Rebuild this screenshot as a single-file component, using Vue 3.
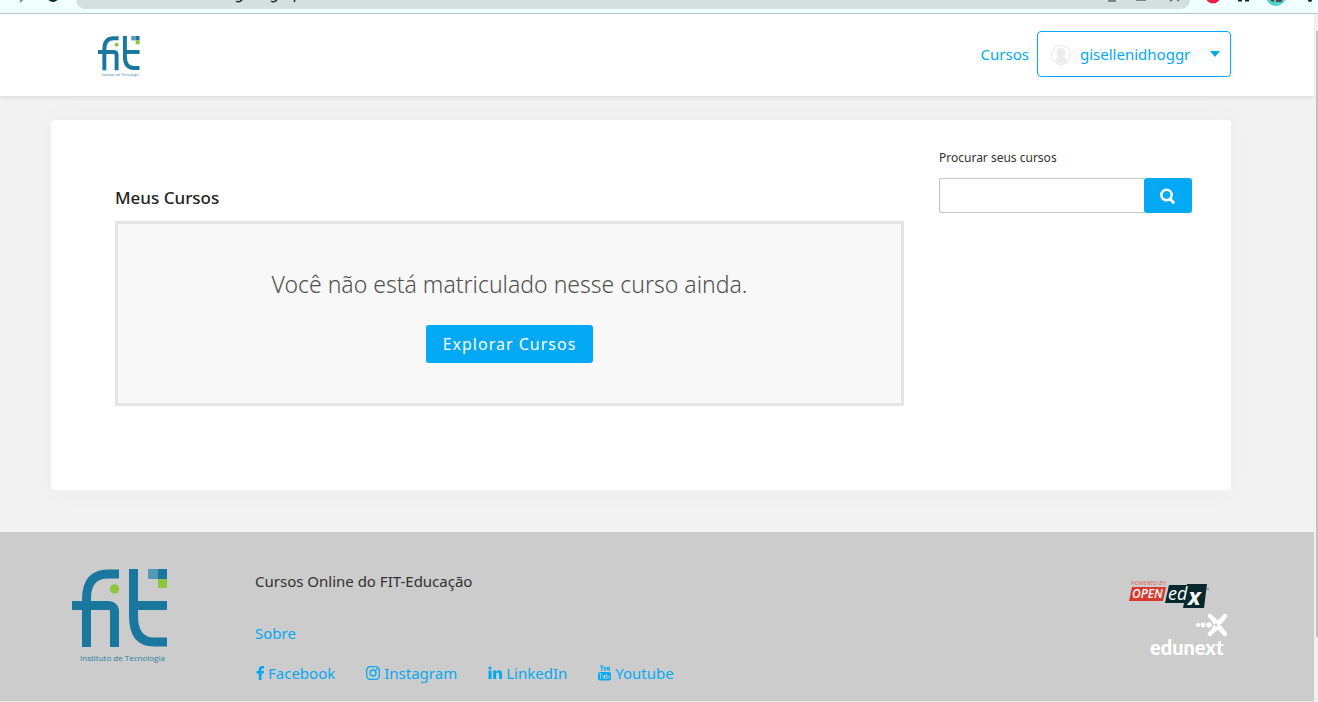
<script setup>
const socials = [
  { id: 'facebook', label: 'Facebook', w: 9 },
  { id: 'instagram', label: 'Instagram', w: 14 },
  { id: 'linkedin', label: 'LinkedIn', w: 14 },
  { id: 'youtube', label: 'Youtube', w: 13 },
]
</script>

<template>
  <div class="window">
    <svg width="0" height="0" class="defs" aria-hidden="true">
      <symbol id="fit-logo" viewBox="0 0 96 96" overflow="visible">
        <g fill="none" stroke="#1a779e" stroke-width="9">
          <path d="M47 5H36Q14.500 5 14.500 30V78" />
          <path d="M0 36.500H36Q42.500 36.500 42.500 43V78" />
          <path d="M61.500 0V47Q61.500 73 82 73H95" />
          <path d="M61.500 36.500H95" />
        </g>
        <circle cx="42.500" cy="20" r="4.700" fill="#8cc63e" />
        <rect x="76" y="0" width="10" height="10" fill="#5598bb" />
        <rect x="86" y="0" width="9" height="10" fill="#1a779e" />
        <rect x="86" y="10" width="9" height="9" fill="#8cc63e" />
        <text x="8" y="92" font-family="Open Sans, sans-serif" font-size="8" font-weight="400" fill="#2c7fa3">Instituto de Tecnologia</text>
      </symbol>
    </svg>

    <div class="browser">
      <svg class="nav-icons" width="76" height="13" aria-hidden="true">
        <path d="M20 2l3-3" stroke="#7d9696" stroke-width="2" />
        <circle cx="53" cy="-4" r="5" fill="none" stroke="#0b2b2b" stroke-width="2" />
      </svg>
      <div class="address">
        <svg class="url" width="80" height="9" fill="none" stroke="#20292c" stroke-width="1.500" aria-hidden="true">
          <path d="M10 1q3 2 6-1M45 1q3 2 6-1M68 2l1-2" />
        </svg>
        <svg width="90" height="9" fill="none" stroke="#5c6668" stroke-width="1.500" aria-hidden="true">
          <path d="M9 0v1h6V0M36 0h10M70 1l5-3 4 3" />
        </svg>
      </div>
      <svg width="128" height="13" aria-hidden="true">
        <circle cx="23" cy="-4" r="7.500" fill="#f01c42" />
        <path d="M48 0h4M55 0h4" stroke="#082c2c" stroke-width="3" />
        <circle cx="86" cy="-4" r="10" fill="#50d5ca" />
        <path d="M81 0l3 1M86 1h6" fill="none" stroke="#514a52" stroke-width="2" />
        <circle cx="120" cy="0" r="2" fill="#072626" />
      </svg>
    </div>

    <div class="viewport">
      <div class="page">
        <header>
          <a href="#" class="brand" aria-label="FIT Instituto de Tecnologia"><svg width="42" height="42"><use href="#fit-logo" /></svg></a>
          <nav>
            <a href="#" class="courses-link">Cursos</a>
            <button type="button" class="user">
              <svg width="22" height="22" viewBox="0 0 22 22" aria-hidden="true">
                <circle cx="11" cy="12" r="9.500" fill="#fff" stroke="#e5e5e5" />
                <circle cx="11" cy="9.500" r="4.500" fill="#ececec" />
                <path d="M5 18q1-5 6-5t6 5q-6 5-12 0z" fill="#ececec" />
              </svg>
              <span>gisellenidhoggr</span>
              <svg width="10" height="6" aria-hidden="true"><path d="M0 0h10L5 6z" fill="#03a9f4" /></svg>
            </button>
          </nav>
        </header>

        <main>
          <section class="courses">
            <h2>Meus Cursos</h2>
            <div class="empty">
              <p>Você não está matriculado nesse curso ainda.</p>
              <a href="#" class="explore">Explorar Cursos</a>
            </div>
          </section>
          <form class="search" @submit.prevent>
            <label for="course-search">Procurar seus cursos</label>
            <div class="field">
              <input id="course-search" type="text">
              <button type="submit" aria-label="Procurar">
                <svg width="16" height="16" fill="none" stroke="#fff" aria-hidden="true">
                  <circle cx="6.500" cy="7" r="5.200" stroke-width="2.600" />
                  <path d="M10 11l3.500 3.500" stroke-width="3" stroke-linecap="round" />
                </svg>
              </button>
            </div>
          </form>
        </main>

        <footer>
          <svg class="footer-logo" width="96" height="96" role="img" aria-label="FIT"><use href="#fit-logo" /></svg>
          <div class="info">
            <p>Cursos Online do FIT-Educação</p>
            <a href="#" class="about">Sobre</a>
            <div class="socials">
              <a v-for="s in socials" :key="s.id" href="#">
                <svg :width="s.w" height="16" :viewBox="`0 0 ${s.w} 16`" fill="#03a9f4" aria-hidden="true">
                  <path v-if="s.id === 'facebook'" d="M9 1v2.400H7.600Q6.500 3.400 6.500 4.600V6H9l-.4 2.600H6.500V15H3.800V8.600H1.500V6h2.300V4.200Q3.800 1 7 .9z" />
                  <g v-else-if="s.id === 'instagram'" fill="none" stroke="#03a9f4" stroke-width="1.300">
                    <rect x=".7" y="1.700" width="12.600" height="12.600" rx="3.500" />
                    <circle cx="7" cy="8" r="3" />
                    <circle cx="10.700" cy="4.300" r=".4" />
                  </g>
                  <g v-else-if="s.id === 'linkedin'">
                    <circle cx="2" cy="3" r="1.600" />
                    <path d="M.5 5.500h3V14h-3zM5.200 5.500H8v1.200q1-1.500 3-1.500 3 0 3 4V14h-2.900V9.500Q11.100 7.500 9.700 7.500 8.100 7.500 8.100 9.500V14H5.200z" />
                  </g>
                  <g v-else>
                    <path d="M2.500 0l1.300 3.500V6M5 0L3.800 3.500M9.500 1.800v3q0 .8 1.700 0V1.800v4" fill="none" stroke="#03a9f4" />
                    <ellipse cx="7" cy="3.900" rx="1" ry="1.800" fill="none" stroke="#03a9f4" />
                    <rect y="7" width="13" height="8.500" rx="1.800" />
                    <path d="M1 8.700h3M2.500 8.700V14M5 10v3q.5 1 1.500 0v-3 4M8 8.500V13.500q2 0 2-1.700t-2-1.500M12 13.500q-1 0-1-1.500t1-1.500" fill="none" stroke="#ccc" stroke-width=".8" />
                  </g>
                </svg>
                {{ s.label }}
              </a>
            </div>
          </div>
          <div class="powered">
            <svg width="82" height="32" viewBox="0 0 82 32" font-family="Open Sans, sans-serif" font-style="italic" font-weight="400" role="img" aria-label="Powered by Open edX">
              <text x="3" y="6" font-size="6" fill="#de6058">POWERED BY</text>
              <path d="M4 8h34l-3 14H1z" fill="#d93a30" />
              <path d="M41 6h18v-1h20l-3 24H55l1-5H37z" fill="#07282d" />
              <text x="4" y="19" font-size="12" font-weight="600" fill="#fff">OPEN</text>
              <text x="40" y="21" font-size="18" fill="#fff">ed</text>
              <text x="60" y="26" font-size="24" font-weight="700" fill="#fff">x</text>
              <circle cx="80" cy="10" r="1" fill="#6e7879" />
            </svg>
            <svg width="78" height="46" viewBox="0 0 78 46" role="img" aria-label="edunext">
              <g fill="#fff">
                <circle cx="48" cy="14" r="2" /><circle cx="53" cy="14" r="2.400" /><circle cx="59" cy="14" r="2.700" />
              </g>
              <path d="M60 5l6 6M75 5l-5 6M60 23l6-6M75 23l-5-6M64 10l6 8M64 18l6-8" stroke="#fff" stroke-width="4.500" stroke-linecap="round" />
              <circle cx="66" cy="14" r="1.400" fill="#ccc" />
              <text x="0" y="44" font-family="Lato, sans-serif" font-size="20" font-weight="900" fill="#fff">edunext</text>
            </svg>
          </div>
        </footer>
      </div>
      <div class="scrollbar"><div class="thumb"></div></div>
    </div>
  </div>
</template>

<style>
body { margin: 0; overflow: hidden; }
</style>

<style scoped>
* { box-sizing: border-box; }
.window { display: flex; flex-direction: column; min-height: 100vh; font: 400 15px/24px "Noto Sans", "Open Sans", sans-serif; color: #313131; }
.defs { position: absolute; }
a { color: #03a9f4; text-decoration: none; }
svg { flex: none; }
.brand svg, .footer-logo, .powered svg { overflow: visible; }
h2, p { margin: 0; }
.browser { display: flex; height: 14px; background: #f0ffff; border-bottom: 1px solid #b8cccb; }
.address { flex: 1; display: flex; justify-content: space-between; height: 9px; background: #d4e0e0; border-radius: 0 0 12px 12px; }
.url { margin-left: 150px; }
.viewport { flex: 1; display: flex; }
.page { flex: 1; display: flex; flex-direction: column; background: #f2f2f2; }
header { display: flex; align-items: center; justify-content: space-between; height: 82px; padding: 0 83px 2px 98px; background: #fff; box-shadow: 0 1px 4px #0000001f; }
.brand { display: flex; margin-top: 6px; }
nav { display: flex; align-items: center; gap: 8px; }
.user { display: flex; align-items: center; width: 194px; height: 46px; padding: 0 10px 0 12px; border: 1px solid #03a9f4; border-radius: 4px; background: #fff; color: #03a9f4; font: inherit; }
.user span { flex: 1; margin-left: 8px; text-align: left; }
main { display: flex; align-items: flex-start; justify-content: space-between; min-height: 370px; margin: 24px 83px 42px 51px; padding: 0 39px 0 64px; background: #fff; border-radius: 4px; box-shadow: 0 0 30px #00000008; }
.courses { flex: 1; max-width: 789px; padding-top: 66px; }
h2 { font-size: 17px; font-weight: 500; line-height: 24px; color: #222; }
.empty { display: flex; flex-direction: column; align-items: center; height: 185px; margin-top: 11px; padding-top: 42px; background: #f8f8f8; border: 3px solid #e4e4e4; color: #505050; }
.empty p { font-size: 23px; font-weight: 300; line-height: 36px; }
.explore { margin-top: 23px; padding: 0 17px; border-radius: 3px; background: #03a9f4; color: #fff; font-size: 16px; line-height: 38px; letter-spacing: 1px; }
.search { width: 253px; padding-top: 28px; }
.search label { display: block; font-size: 12px; line-height: 20px; color: #313131; }
.field { display: flex; height: 35px; margin-top: 10px; }
.field input { flex: 1; min-width: 0; padding: 0 8px; border: 1px solid #c4c4c4; border-right: 0; border-radius: 3px 0 0 3px; font: inherit; }
.field button { display: flex; align-items: center; justify-content: center; width: 48px; border: 0; border-radius: 3px; background: #03a9f4; }
footer { flex: 1; display: flex; align-items: flex-start; padding: 37px 86px 0 72px; background: #ccc; border-bottom: 1px solid #e4e4e4; }
.info { flex: 1; margin-left: 87px; }
.about { display: block; margin-top: 28px; }
.socials { display: flex; gap: 31px; margin-top: 16px; }
.socials a { display: flex; align-items: center; gap: 4px; }
.powered { display: flex; flex-direction: column; align-items: flex-end; padding-top: 10px; }
.powered svg:first-child { margin-right: 18px; }
.scrollbar { width: 4px; padding-top: 17px; background: #f1f1f1; border-left: 1px solid #f1f1f1; }
.thumb { height: 606px; margin-left: 1px; background: #c1c1c1; }
</style>
